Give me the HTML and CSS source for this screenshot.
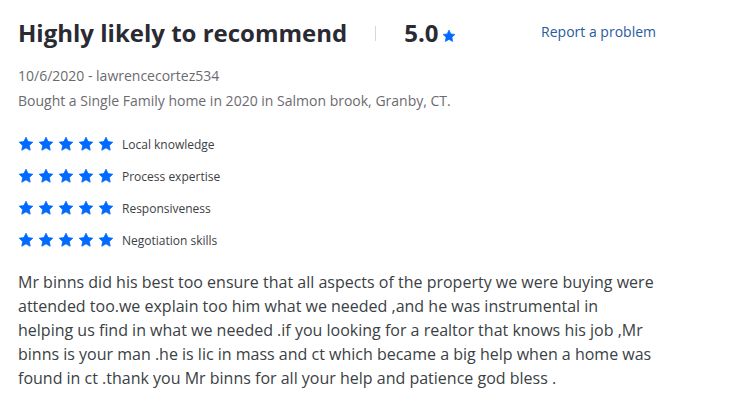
FILE: index.html
```html
<!DOCTYPE html>
<html>
<head>
<meta charset="utf-8">
<link rel="stylesheet" href="styles.css">
</head>
<body>
<svg width="0" height="0" class="defs">
  <defs>
    <symbol id="star" viewBox="0 0 24 24">
      <path d="M12 1.8l3.1 6.6 7.1.9-5.2 4.9 1.3 7.1L12 17.8l-6.3 3.5 1.3-7.1L1.8 9.3l7.1-.9z" stroke-linejoin="round" stroke="currentColor" stroke-width="1.2"/>
    </symbol>
  </defs>
</svg>
<div class="review">
  <div class="header">
    <h2 class="title">Highly likely to recommend</h2>
    <span class="divider"></span>
    <span class="score">5.0</span>
    <svg class="score-star"><use href="#star"/></svg>
    <a class="report" href="#">Report a problem</a>
  </div>
  <div class="meta">10/6/2020 - lawrencecortez534</div>
  <div class="meta">Bought a Single Family home in 2020 in Salmon brook, Granby, CT.</div>
  <div class="ratings">
    <div class="rating">
      <span class="stars"><svg><use href="#star"/></svg><svg><use href="#star"/></svg><svg><use href="#star"/></svg><svg><use href="#star"/></svg><svg><use href="#star"/></svg></span>
      <span class="label">Local knowledge</span>
    </div>
    <div class="rating">
      <span class="stars"><svg><use href="#star"/></svg><svg><use href="#star"/></svg><svg><use href="#star"/></svg><svg><use href="#star"/></svg><svg><use href="#star"/></svg></span>
      <span class="label">Process expertise</span>
    </div>
    <div class="rating">
      <span class="stars"><svg><use href="#star"/></svg><svg><use href="#star"/></svg><svg><use href="#star"/></svg><svg><use href="#star"/></svg><svg><use href="#star"/></svg></span>
      <span class="label">Responsiveness</span>
    </div>
    <div class="rating">
      <span class="stars"><svg><use href="#star"/></svg><svg><use href="#star"/></svg><svg><use href="#star"/></svg><svg><use href="#star"/></svg><svg><use href="#star"/></svg></span>
      <span class="label">Negotiation skills</span>
    </div>
  </div>
  <p class="body">Mr binns did his best too ensure that all aspects of the property we were buying were<br>attended too.we explain too him what we needed ,and he was instrumental in<br>helping us find in what we needed .if you looking for a realtor that knows his job ,Mr<br>binns is your man .he is lic in mass and ct which became a big help when a home was<br>found in ct .thank you Mr binns for all your help and patience god bless .</p>
</div>
</body>
</html>
```

FILE: styles.css
```css
html, body {
  margin: 0;
  padding: 0;
  background: #ffffff;
}
body {
  font-family: "Open Sans", "Liberation Sans", sans-serif;
  color: #3b4144;
}
.defs {
  position: absolute;
}
.review {
  padding: 14px 18px 0 18px;
  width: 680px;
}
.header {
  display: flex;
  align-items: center;
  height: 36px;
}
.title {
  margin: 0;
  font-size: 24px;
  font-weight: 700;
  color: #2a2a33;
}
.divider {
  width: 1px;
  height: 15px;
  background: #d8d8d8;
  margin: 2px 28px 0 28px;
}
.score {
  font-size: 24px;
  font-weight: 700;
  color: #2a2a33;
}
.score-star {
  width: 14px;
  height: 14px;
  color: #006aff;
  fill: #006aff;
  margin: 8px 0 0 3px;
}
.report {
  margin-left: auto;
  margin-right: 42px;
  font-size: 14px;
  color: #2a5aa0;
  text-decoration: none;
  align-self: flex-start;
  margin-top: 8px;
}
.header + .meta {
  margin-top: 13px;
}
.meta {
  font-size: 14px;
  color: #6b6b70;
  line-height: 25px;
}
.ratings {
  margin-top: 20px;
  display: flex;
  flex-direction: column;
  gap: 10px;
}
.rating {
  display: flex;
  align-items: center;
  height: 22px;
}
.stars {
  display: flex;
  gap: 4px;
  width: 104px;
}
.stars svg {
  width: 16px;
  height: 16px;
  color: #006aff;
  fill: #006aff;
}
.label {
  font-size: 12px;
  color: #3b4144;
}
.body {
  margin: 19px 0 0 0;
  font-size: 16px;
  line-height: 24px;
  color: #3b4144;
}
```
